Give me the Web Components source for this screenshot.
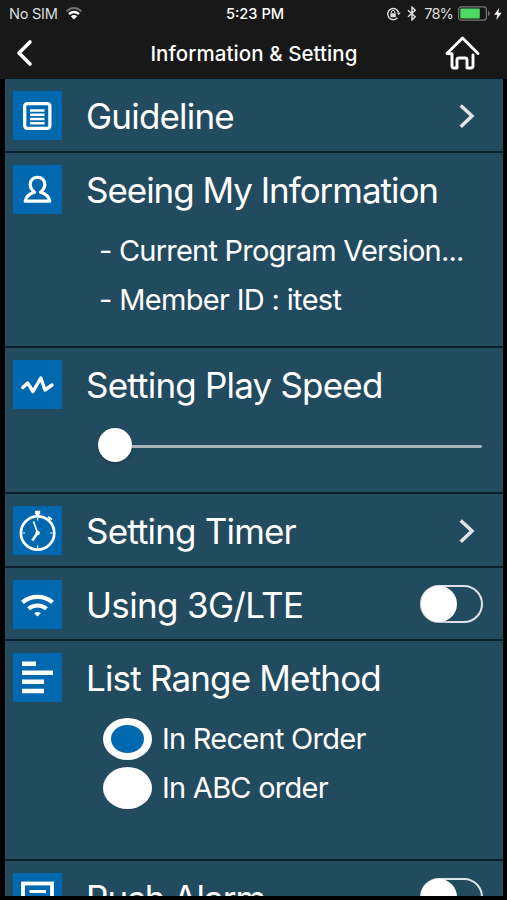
<!DOCTYPE html>
<html lang="en">
<head>
<meta charset="utf-8">
<title>Information &amp; Setting</title>
<style>
  html, body {
    margin: 0;
    height: 900px;
    overflow: hidden;
    background: #000;
  }
  body {
    font-family: Inter, Roboto, sans-serif;
    color: #fff;
  }
</style>
</head>
<body>
<settings-app>
  <status-bar slot="top"></status-bar>
  <nav-bar slot="top">Information &amp; Setting</nav-bar>

  <setting-row icon="list" style="--h: 74px; --ls: -0.8px">Guideline
    <row-arrow slot="action"></row-arrow>
  </setting-row>
  <setting-row icon="user" style="--h: 195px; --ls: -1.03px">Seeing My Information
    <info-line slot="detail" style="--ls: -0.78px">- Current Program Version...</info-line>
    <info-line slot="detail" style="--ls: -0.67px">- Member ID : itest</info-line>
  </setting-row>
  <setting-row icon="wave" style="--h: 146px; --ls: -0.8px">Setting Play Speed
    <play-slider slot="detail"></play-slider>
  </setting-row>
  <setting-row icon="timer" style="--h: 74px; --ls: -0.83px">Setting Timer
    <row-arrow slot="action"></row-arrow>
  </setting-row>
  <setting-row icon="wifi" style="--h: 73px; --ls: -0.67px">Using 3G/LTE
    <toggle-switch slot="action"></toggle-switch>
  </setting-row>
  <setting-row icon="bars" style="--h: 220px; --ls: -0.83px">List Range Method
    <radio-group slot="detail">
      <radio-option checked>In Recent Order</radio-option>
      <radio-option>In ABC order</radio-option>
    </radio-group>
  </setting-row>
  <setting-row icon="push" style="--h: 74px; --ls: -0.95px">Push Alarm
    <toggle-switch slot="action"></toggle-switch>
  </setting-row>
</settings-app>

<script>
  // 49x49 row icons
  const ICONS = {
    list: `<rect x="11.7" y="12.7" width="25.200" height="24.600" rx="2.500" stroke-width="3.300"/>
      <path d="M17 19.500h14.500M17 23.800h14.500M17 28h14.500M17 32.200h14.500" stroke-width="2.500"/>`,
    user: `<path d="M12.200 36.200h24.600c-.8-4.700-4-7.500-9.300-9 2.700-2.200 4.300-4.700 4.300-7.700 0-4.400-3.300-7.200-7.300-7.200s-7.300 2.800-7.300 7.200c0 3 1.600 5.500 4.300 7.700-5.300 1.500-8.500 4.300-9.300 9z" stroke-width="3.200" stroke-linejoin="round"/>`,
    wave: `<path d="M9.800 27.500l4.800-4.500 5.400 8.500 7.800-13.500 4.200 12 7-5" stroke-width="3.400" stroke-linecap="round" stroke-linejoin="round"/>`,
    timer: `<circle cx="24.600" cy="27" r="16.700" stroke-width="2.700"/>
      <path d="M22 6.500h5.200M24.600 6v4" stroke-width="3.400"/>
      <path d="M35 10.800l4 2.600M37 12.300l-2 3" stroke-width="1.800"/>
      <path d="M20.500 15.500l4.100 11.500" stroke-width="1.700"/>
      <path d="M24.600 27l-5.300 7.500" stroke-width="2.600"/>
      <path d="M24.600 12v2.500M24.600 39.500v2.500M9.600 27h2.500M37.100 27h2.500" stroke-width="1.200"/>
      <circle cx="24.600" cy="27" r="2.200" fill="#fff" stroke="none"/>`,
    wifi: `<path d="M9.500 22.300c8.600-7.300 21.400-7.300 30 0" stroke-width="4.200"/>
      <path d="M15.500 28.700c5.200-4.400 12.800-4.400 18 0" stroke-width="4"/>
      <path d="M24.500 36.500l-3.300-3.300q3.300-2.500 6.600 0z" fill="#fff" stroke="none"/>`,
    bars: `<path d="M9 10.700h14M9 19.700h31M9 28.700h22M9 38h22" stroke-width="4.500"/>`,
    push: `<rect x="10" y="10.500" width="29" height="27" stroke-width="3.800"/>
      <path d="M16.500 18.500h16.500M16.500 24.500h16.500M16.500 30.500h16.500" stroke-width="3"/>`
  };

  class SettingsApp extends HTMLElement {
    constructor() {
      super();
      this.attachShadow({ mode: 'open' }).innerHTML = `
        <style>
          :host {
            display: flex;
            flex-direction: column;
            height: 900px;
            background: #000;
          }
          .top {
            flex: none;
            height: 79px;
            background: #181818;
          }
          .list {
            flex: none;
            height: 817px;
            margin: 0 4px 0 5px;
            overflow: hidden;
            background: #234b5f;
          }
        </style>
        <div class="top"><slot name="top"></slot></div>
        <div class="list"><slot></slot></div>
      `;
    }
  }

  class StatusBar extends HTMLElement {
    constructor() {
      super();
      this.attachShadow({ mode: 'open' }).innerHTML = `
        <style>
          :host {
            display: grid;
            grid-template-columns: 1fr auto 1fr;
            align-items: center;
            height: 27px;
            padding: 0 5px 0 9px;
            font-size: 14.6px;
            color: #ddd;
          }
          div { display: flex; align-items: center; white-space: nowrap; }
          .right { justify-content: flex-end; }
          .time { color: #fff; font-weight: 500; margin-left: -1px; }
          .sim { letter-spacing: -0.3px; }
          .pct { letter-spacing: -0.9px; }
          svg { display: block; flex: none; fill: none; stroke: #ddd; }
        </style>
        <div>
          <span class="sim">No SIM</span>
          <svg width="18" height="13" viewBox="0 0 18 13" style="margin-left: 7px">
            <path d="M1.500 4.200Q9-2 16.500 4.200" stroke="#777" stroke-width="1.900"/>
            <path d="M4 7Q9 3 14 7" stroke="#fff" stroke-width="2.500"/>
            <path d="M9 12.500L5.800 9.200Q9 7 12.200 9.200z" fill="#fff" stroke="none"/>
          </svg>
        </div>
        <div class="time">5:23 PM</div>
        <div class="right">
          <svg width="15" height="14" viewBox="0 0 15 14" style="margin-right: 6px">
            <path d="M12.600 5.300A5.600 5.600 0 1 0 11.500 10.800" stroke-width="1.400"/>
            <path d="M10.700 5.500h4l-2 2.800z" fill="#ddd" stroke="none"/>
            <rect x="4.400" y="6.200" width="5.400" height="4" fill="#ddd" stroke="none"/>
            <path d="M5.400 6.500V5.100a1.700 1.700 0 0 1 3.400 0v1.400" stroke-width="1"/>
          </svg>
          <svg width="10" height="15" viewBox="0 0 10 15" style="margin-right: 7px">
            <path d="M1 4.200l7.200 6.600L5 13.800V1.200l3.200 3L1 10.800" stroke-width="1.500"/>
          </svg>
          <span class="pct">78%</span>
          <svg width="32" height="15" viewBox="0 0 32 15" style="margin: 0 4px 0 5px">
            <rect x=".6" y=".8" width="27.800" height="13.400" rx="2.800" stroke="#777" stroke-width="1.200"/>
            <rect x="2.300" y="2.500" width="19.500" height="10" rx="1" fill="#4cd964" stroke="none"/>
            <path d="M30 5v5q1.700-.8 1.700-2.500T30 5z" fill="#777" stroke="none"/>
          </svg>
          <svg width="8" height="12" viewBox="0 0 8 12">
            <path d="M5.200 0L.2 6.800h3L2.400 12 7.600 4.800H4.400z" fill="#fff" stroke="none"/>
          </svg>
        </div>
      `;
    }
  }

  class NavBar extends HTMLElement {
    constructor() {
      super();
      this.attachShadow({ mode: 'open' }).innerHTML = `
        <style>
          :host {
            display: grid;
            grid-template-columns: 1fr auto 1fr;
            align-items: center;
            height: 52px;
            padding: 0 27px 0 16px;
          }
          .title {
            font-size: 20.5px;
            font-weight: 500;
            letter-spacing: 0.07px;
            white-space: nowrap;
            margin-left: 12px;
          }
          svg { display: block; fill: none; stroke: #fff; }
          .home { justify-self: end; }
        </style>
        <svg width="18" height="28" viewBox="0 0 18 28">
          <path d="M14 3L3 14l11 11" stroke-width="3.600" stroke-linecap="round" stroke-linejoin="round"/>
        </svg>
        <div class="title"><slot></slot></div>
        <svg class="home" width="36" height="36" viewBox="0 0 36 36">
          <path d="M3 18.500L18.500 3 34 18.500M3 18.500l5 .3V31q0 2 2 2h3V25q0-2 2-2h6q2 0 2 2v8h3.500q2.500 0 2.500-2V20" stroke-width="2.900" stroke-linecap="round" stroke-linejoin="round"/>
        </svg>
      `;
    }
  }

  class SettingRow extends HTMLElement {
    constructor() {
      super();
      this.attachShadow({ mode: 'open' }).innerHTML = `
        <style>
          :host {
            display: block;
            box-sizing: border-box;
            height: var(--h);
            padding: 12px 21px 0 8px;
            border-bottom: 2px solid #08202c;
          }
          .head {
            display: flex;
            align-items: center;
            height: 49px;
          }
          .icon {
            flex: none;
            width: 49px;
            height: 49px;
            background: #0068ae;
            fill: none;
            stroke: #fff;
          }
          .label {
            flex: 1;
            margin-left: 24px;
            padding-top: 2px;
            font-size: 35px;
            line-height: 47px;
            letter-spacing: var(--ls);
            white-space: nowrap;
          }
        </style>
        <div class="head">
          <svg class="icon" viewBox="0 0 49 49">${ICONS[this.getAttribute('icon')]}</svg>
          <div class="label"><slot></slot></div>
          <slot name="action"></slot>
        </div>
        <slot name="detail"></slot>
      `;
    }
  }

  class RowArrow extends HTMLElement {
    constructor() {
      super();
      this.attachShadow({ mode: 'open' }).innerHTML = `
        <style>
          :host { display: block; margin-right: 7px; }
          svg { display: block; fill: none; stroke: #dfe3ea; }
        </style>
        <svg width="17" height="28" viewBox="0 0 17 28">
          <path d="M2.700 3.500L14 14 2.700 24.700" stroke-width="3.500"/>
        </svg>
      `;
    }
  }

  class InfoLine extends HTMLElement {
    constructor() {
      super();
      this.attachShadow({ mode: 'open' }).innerHTML = `
        <style>
          :host {
            display: block;
            height: 37px;
            margin-left: 86px;
            padding-top: 12px;
            font-size: 29px;
            line-height: 49px;
            letter-spacing: var(--ls);
            white-space: nowrap;
          }
        </style>
        <slot></slot>
      `;
    }
  }

  class PlaySlider extends HTMLElement {
    constructor() {
      super();
      this.attachShadow({ mode: 'open' }).innerHTML = `
        <style>
          :host {
            display: flex;
            align-items: center;
            margin: 19px 0 0 85px;
          }
          .thumb {
            width: 34px;
            height: 34px;
            border-radius: 50%;
            background: #fff;
            box-shadow: 0 2px 3px rgba(0, 0, 0, 0.2);
          }
          .track {
            flex: 1;
            height: 3px;
            margin-top: 2px;
            border-radius: 0 2px 2px 0;
            background: #a9b5b8;
          }
        </style>
        <div class="thumb"></div>
        <div class="track"></div>
      `;
    }
  }

  class ToggleSwitch extends HTMLElement {
    constructor() {
      super();
      this.attachShadow({ mode: 'open' }).innerHTML = `
        <style>
          :host {
            display: flex;
            align-items: center;
            box-sizing: border-box;
            width: 63px;
            height: 38px;
            border: 2px solid #dde3e8;
            border-radius: 19px;
            margin: 0 -1px 2px 0;
          }
          .knob {
            width: 36px;
            height: 36px;
            margin-left: -1px;
            border-radius: 50%;
            background: #fff;
            box-shadow: 0 2px 2px rgba(0, 0, 0, 0.15);
          }
        </style>
        <div class="knob"></div>
      `;
    }
  }

  class RadioGroup extends HTMLElement {
    constructor() {
      super();
      this.attachShadow({ mode: 'open' }).innerHTML = `
        <style>
          :host {
            display: flex;
            flex-direction: column;
            margin: 12px 0 0 90px;
          }
        </style>
        <slot></slot>
      `;
    }
  }

  class RadioOption extends HTMLElement {
    constructor() {
      super();
      this.attachShadow({ mode: 'open' }).innerHTML = `
        <style>
          :host {
            display: flex;
            align-items: center;
            height: 49px;
            font-size: 29px;
            letter-spacing: -0.74px;
            white-space: nowrap;
          }
          .dot {
            box-sizing: border-box;
            width: 49px;
            height: 42px;
            margin-right: 10px;
            border-radius: 50%;
            background: #fff;
          }
          :host([checked]) .dot {
            border: solid #fff;
            border-width: 7px 8px;
            background: #0068ae;
          }
        </style>
        <span class="dot"></span>
        <slot></slot>
      `;
    }
  }

  customElements.define('settings-app', SettingsApp);
  customElements.define('status-bar', StatusBar);
  customElements.define('nav-bar', NavBar);
  customElements.define('setting-row', SettingRow);
  customElements.define('row-arrow', RowArrow);
  customElements.define('info-line', InfoLine);
  customElements.define('play-slider', PlaySlider);
  customElements.define('toggle-switch', ToggleSwitch);
  customElements.define('radio-group', RadioGroup);
  customElements.define('radio-option', RadioOption);
</script>
</body>
</html>
